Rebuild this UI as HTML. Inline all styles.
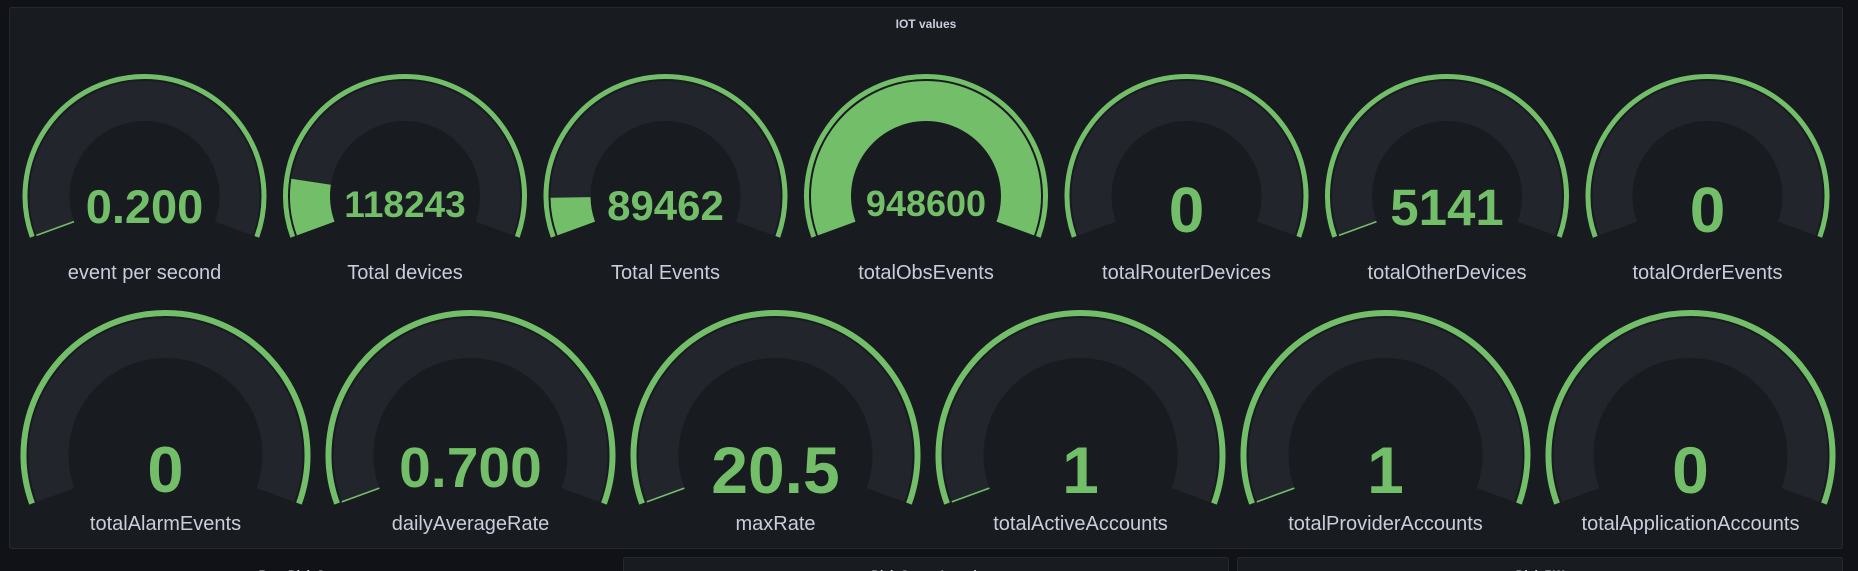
<!DOCTYPE html>
<html><head><meta charset="utf-8">
<style>
html,body{margin:0;padding:0;background:#111217;width:1858px;height:571px;overflow:hidden}
svg{display:block}
text{font-family:"Liberation Sans",sans-serif}
</style></head>
<body>
<svg id="s" width="1858" height="571" viewBox="0 0 1858 571" xmlns="http://www.w3.org/2000/svg">
<rect x="0" y="0" width="1858" height="571" fill="#111217"/>
<rect x="9.5" y="7.5" width="1833" height="541" rx="2" fill="#181b1f" stroke="#25282d"/>
<text x="926" y="28" font-size="12" font-weight="bold" fill="#ccccdc" text-anchor="middle">IOT values</text>
<rect x="623.5" y="557.5" width="605" height="20" rx="2" fill="#181b1f" stroke="#25282d"/>
<rect x="1237.5" y="557.5" width="605" height="20" rx="2" fill="#181b1f" stroke="#25282d"/>
<text x="310" y="579" font-size="12" font-weight="bold" fill="#ccccdc" text-anchor="middle">Post Disk Storage</text>
<text x="926" y="579" font-size="12" font-weight="bold" fill="#ccccdc" text-anchor="middle">Disk Queue Length</text>
<text x="1540" y="579" font-size="12" font-weight="bold" fill="#ccccdc" text-anchor="middle">Disk RW</text>
<g id="g"></g>
<g fill="#73bf69" text-anchor="middle" font-weight="bold">
<text x="144.5" y="223" font-size="47">0.200</text>
<text x="405" y="217" font-size="37">118243</text>
<text x="665.5" y="220" font-size="42">89462</text>
<text x="926" y="216" font-size="36">948600</text>
<text x="1186.5" y="232" font-size="64">0</text>
<text x="1447" y="225" font-size="51">5141</text>
<text x="1707.5" y="232" font-size="64">0</text>
<text x="165.5" y="492" font-size="65">0</text>
<text x="470.5" y="487" font-size="57">0.700</text>
<text x="775.5" y="493" font-size="66">20.5</text>
<text x="1080.5" y="493" font-size="66">1</text>
<text x="1385.5" y="493" font-size="66">1</text>
<text x="1690.5" y="493" font-size="66">0</text>
</g>
<g fill="#ccccdc" text-anchor="middle" font-size="20">
<text x="144.5" y="279">event per second</text>
<text x="405" y="279">Total devices</text>
<text x="665.5" y="279">Total Events</text>
<text x="926" y="279">totalObsEvents</text>
<text x="1186.5" y="279">totalRouterDevices</text>
<text x="1447" y="279">totalOtherDevices</text>
<text x="1707.5" y="279">totalOrderEvents</text>
<text x="165.5" y="530">totalAlarmEvents</text>
<text x="470.5" y="530">dailyAverageRate</text>
<text x="775.5" y="530">maxRate</text>
<text x="1080.5" y="530">totalActiveAccounts</text>
<text x="1385.5" y="530">totalProviderAccounts</text>
<text x="1690.5" y="530">totalApplicationAccounts</text>
</g>
</svg>
<script>
(function(){
var g=document.getElementById('g'),out='';
var S=200,E=-20;
function pt(cx,cy,r,a){a=a*Math.PI/180;return [cx+r*Math.cos(a),cy-r*Math.sin(a)];}
function arc(cx,cy,r,a1,a2){var p=pt(cx,cy,r,a1),q=pt(cx,cy,r,a2);var la=(a1-a2)>180?1:0;
return 'M'+p[0].toFixed(2)+' '+p[1].toFixed(2)+' A'+r+' '+r+' 0 '+la+' 1 '+q[0].toFixed(2)+' '+q[1].toFixed(2);}
function sector(cx,cy,ro,ri,a1,a2){var p=pt(cx,cy,ri,a2),q=pt(cx,cy,ri,a1);var la=(a1-a2)>180?1:0;
return arc(cx,cy,ro,a1,a2)+' L'+p[0].toFixed(2)+' '+p[1].toFixed(2)+' A'+ri+' '+ri+' 0 '+la+' 0 '+q[0].toFixed(2)+' '+q[1].toFixed(2)+' Z';}
function gauge(cx,cy,R,sw,ro,ri,frac){
out+='<path d="'+sector(cx,cy,ro,ri,S,E)+'" fill="#22252b"/>';
out+='<path d="'+arc(cx,cy,R,S,E)+'" fill="none" stroke="#73bf69" stroke-width="'+sw+'"/>';
if(frac>0){
 if(frac<0.02){var p=pt(cx,cy,ri,S),q=pt(cx,cy,ro,S);
  out+='<line x1="'+p[0]+'" y1="'+p[1]+'" x2="'+q[0]+'" y2="'+q[1]+'" stroke="#73bf69" stroke-width="1.6"/>';}
 else out+='<path d="'+sector(cx,cy,ro,ri,S,S-(S-E)*frac)+'" fill="#73bf69"/>';
}}
var f1=[0.003,0.13,0.087,1,0,0.003,0];
for(var i=0;i<7;i++)gauge(144.5+260.5*i,196,119.5,5,115,75,f1[i]);
var f2=[0,0.003,0.003,0.003,0.003,0];
for(var j=0;j<6;j++)gauge(165.5+305*j,455,142,6,137,97,f2[j]);
g.innerHTML=out;
})();
</script>
</body></html>
